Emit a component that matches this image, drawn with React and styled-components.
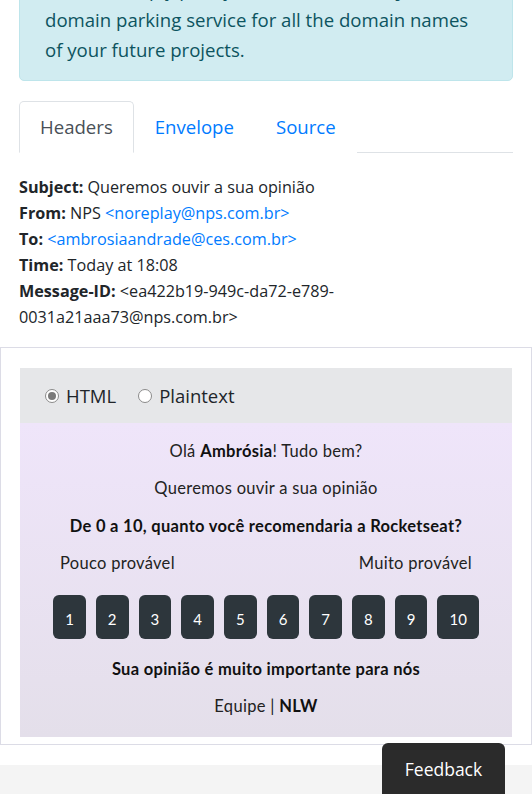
import React, { useState } from 'react';
import styled, { createGlobalStyle } from 'styled-components';

const GlobalStyle = createGlobalStyle`
  html, body {
    margin: 0;
    padding: 0;
    background: #fff;
    font-family: "Open Sans", "Noto Sans", sans-serif;
    color: #212529;
  }
  * { box-sizing: border-box; }
`;

const headers = [
  { label: 'Subject:', value: 'Queremos ouvir a sua opinião' },
  { label: 'From:', value: 'NPS ', link: '<noreplay@nps.com.br>' },
  { label: 'To:', value: '', link: '<ambrosiaandrade@ces.com.br>' },
  { label: 'Time:', value: 'Today at 18:08' },
  { label: 'Message-ID:', value: '<ea422b19-949c-da72-e789-0031a21aaa73@nps.com.br>' },
];

const scores = [1, 2, 3, 4, 5, 6, 7, 8, 9, 10];

function App() {
  const [mode, setMode] = useState('html');
  const [tab, setTab] = useState('Headers');

  return (
    <Page>
      <GlobalStyle />
      <Top>
        <Alert>
          You can simply park your <b>domains easily and for free using our</b>
          <br />
          domain parking service for all the domain names
          <br />
          of your future projects.
        </Alert>

        <Tabs>
          {['Headers', 'Envelope', 'Source'].map((t) => (
            <Tab key={t} active={tab === t} onClick={() => setTab(t)}>{t}</Tab>
          ))}
        </Tabs>

        <HeaderList>
          {headers.map((h) => (
            <HeaderRow key={h.label}>
              <b>{h.label}</b> {h.value}
              {h.link && <Link>{h.link}</Link>}
            </HeaderRow>
          ))}
        </HeaderList>
      </Top>

      <Frame>
        <ModeBar>
          <RadioLabel>
            <Radio checked={mode === 'html'} onClick={() => setMode('html')} />
            HTML
          </RadioLabel>
          <RadioLabel>
            <Radio checked={mode === 'text'} onClick={() => setMode('text')} />
            Plaintext
          </RadioLabel>
        </ModeBar>

        <Mail>
          <MailText>Olá <strong>Ambrósia</strong>! Tudo bem?</MailText>
          <MailText>Queremos ouvir a sua opinião</MailText>
          <MailText bold>De 0 a 10, quanto você recomendaria a Rocketseat?</MailText>
          <Scale>
            <span>Pouco provável</span>
            <span>Muito provável</span>
          </Scale>
          <Scores>
            {scores.map((n) => (
              <Score key={n}>{n}</Score>
            ))}
          </Scores>
          <MailText bold>Sua opinião é muito importante para nós</MailText>
          <MailText last>Equipe | <strong>NLW</strong></MailText>
        </Mail>
      </Frame>

      <Footer />
      <FeedbackButton>Feedback</FeedbackButton>
    </Page>
  );
}

const Page = styled.div`
  overflow: hidden;
`;

const Top = styled.div`
  padding: 0 19px;
`;

const Alert = styled.div`
  margin-top: -41px;
  padding: 15px 25px;
  background: #d1ecf1;
  border: 1px solid #bee5eb;
  border-radius: 5px;
  color: #0c5460;
  font-size: 18.6px;
  line-height: 30px;
  white-space: nowrap;

  b { font-weight: 700; }
`;

const Tabs = styled.div`
  display: flex;
  margin-top: 20px;
  border-bottom: 1px solid #dee2e6;
`;

const Tab = styled.div`
  padding: 10px 20px;
  margin-bottom: -1px;
  font-size: 18.6px;
  line-height: 30px;
  cursor: pointer;
  color: ${(p) => (p.active ? '#495057' : '#007bff')};
  background: #fff;
  border: 1px solid ${(p) => (p.active ? '#dee2e6' : 'transparent')};
  border-bottom-color: ${(p) => (p.active ? '#fff' : 'transparent')};
  border-radius: 5px 5px 0 0;
`;

const HeaderList = styled.div`
  padding: 21px 0 17px;
  font-size: 16.2px;
  line-height: 26px;
  color: #212529;

  b { font-weight: 700; }
`;

const HeaderRow = styled.div`
  max-width: 360px;
`;

const Link = styled.span`
  color: #007bff;
`;

const Frame = styled.div`
  border: 1px solid #dcdce6;
  padding: 20px 19px 7px;
`;

const ModeBar = styled.div`
  display: flex;
  align-items: center;
  gap: 22px;
  height: 55px;
  padding-left: 25px;
  background: #e6e7e9;
  font-size: 18.5px;
  color: #212529;
`;

const RadioLabel = styled.label`
  display: flex;
  align-items: center;
  gap: 7px;
  cursor: pointer;
`;

const Radio = styled.span`
  width: 14px;
  height: 14px;
  border-radius: 50%;
  border: 1px solid #8a8a8a;
  background: #fff;
  display: flex;
  align-items: center;
  justify-content: center;

  &::after {
    content: '';
    width: 8px;
    height: 8px;
    border-radius: 50%;
    background: ${(p) => (p.checked ? '#7a7a7a' : 'transparent')};
  }
`;

const Mail = styled.div`
  display: flex;
  flex-direction: column;
  align-items: center;
  padding: 17px 0 20px;
  background: linear-gradient(180deg, #efe5fa 0%, #e4dfea 100%);
  font-family: "Lato", "Noto Sans", sans-serif;
  font-size: 16.5px;
  letter-spacing: 0.3px;
  color: #222;

  strong { font-weight: 700; color: #111; }
`;

const MailText = styled.p`
  margin: ${(p) => (p.bold ? '1px 0 15px' : '0 0 15px')};
  margin-bottom: ${(p) => (p.last ? 0 : '15px')};
  line-height: 22px;
  font-weight: ${(p) => (p.bold ? 700 : 400)};
  color: ${(p) => (p.bold ? '#111' : '#222')};
`;

const Scale = styled.div`
  display: flex;
  justify-content: space-between;
  align-self: stretch;
  padding: 0 40px;
  line-height: 22px;
  margin-bottom: 21px;
`;

const Scores = styled.div`
  display: flex;
  justify-content: center;
  gap: 10px;
  margin-bottom: 18px;
`;

const Score = styled.button`
  height: 44px;
  min-width: 32px;
  padding: 4px 12px 0;
  border: 0;
  border-radius: 6px;
  background: #2d363c;
  color: #fff;
  font-family: "Lato", "Noto Sans", sans-serif;
  font-weight: 400;
  font-size: 15px;
  cursor: pointer;
`;

const Footer = styled.div`
  height: 60px;
  margin-top: 20px;
  background: #f4f4f4;
`;

const FeedbackButton = styled.button`
  position: fixed;
  right: 27px;
  bottom: -10px;
  width: 123px;
  height: 61px;
  padding-bottom: 10px;
  border: 0;
  border-radius: 6px 6px 0 0;
  background: #2b2b2b;
  color: #fff;
  font-family: "Open Sans", "Noto Sans", sans-serif;
  font-size: 17.5px;
  cursor: pointer;
`;

export default App;
